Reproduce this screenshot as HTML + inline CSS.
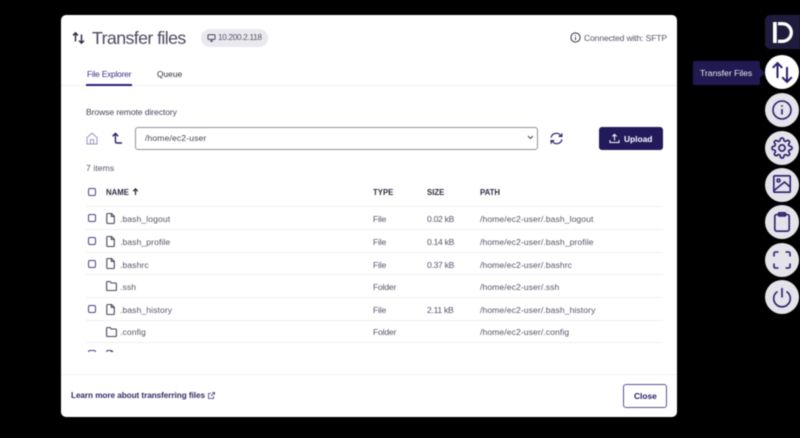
<!DOCTYPE html>
<html><head><meta charset="utf-8"><style>
html,body{margin:0;padding:0;width:800px;height:438px;overflow:hidden;background:#000;font-family:"Liberation Sans",sans-serif}
body{filter:blur(.4px)}
.a{position:absolute;white-space:nowrap}
#m{position:absolute;left:61px;top:15px;width:616px;height:402px;background:#fff;border-radius:5px}
.t{position:absolute;white-space:nowrap;font-size:8.6px;line-height:12px;color:#55546a;letter-spacing:.08px;margin-top:.5px}
.z{letter-spacing:-.3px}
.f{letter-spacing:-.2px}
.h{position:absolute;white-space:nowrap;font-size:7.8px;font-weight:bold;line-height:12px;color:#2e2d40;letter-spacing:0;margin-top:1px}
.l{position:absolute;left:86px;width:577px;height:1px;background:#efeff2}
.c{position:absolute;left:88px;width:6px;height:6px;border:1.3px solid #4a3f8f;border-radius:2px}
.s{position:absolute;left:765px;width:34px;height:34px;border-radius:50%;background:#e4e3ea}
svg{position:absolute;overflow:visible}
</style></head><body>
<div id="m"></div>

<svg style="left:72px;top:32px" width="13" height="12" viewBox="0 0 13 12" fill="none" stroke="#26263a" stroke-width="1.4"><path d="M3.500 9.500V1M1 3.400 3.500 .9 6 3.400M9.500 2.500V11M7 8.600 9.500 11.100 12 8.600"/></svg>
<div class="a" style="left:92px;top:27px;font-size:17.800px;line-height:22px;color:#4b4a5f;letter-spacing:-.6px">Transfer files</div>
<div class="a" style="left:201px;top:29px;width:67px;height:18px;border-radius:9px;background:#e9e9ee"></div>
<svg style="left:207px;top:34px" width="9" height="8" viewBox="0 0 9 8" fill="none" stroke="#45445a" stroke-width="1"><rect x="1" y=".8" width="7" height="4.600" rx=".6"/><path d="M3 7.200h3M4.500 5.400v1.800"/></svg>
<div class="a" style="left:218px;top:32px;font-size:8.200px;line-height:12px;color:#55546a;letter-spacing:-.3px">10.200.2.118</div>
<svg style="left:570px;top:32px" width="11" height="11" viewBox="0 0 11 11" fill="none" stroke="#33334a" stroke-width="1"><circle cx="5.500" cy="5.500" r="4.600"/><path d="M5.500 5v3M5.500 3v.9"/></svg>
<div class="a" style="left:584px;top:32px;font-size:8.600px;line-height:12px;color:#55546a;letter-spacing:-.15px">Connected with: SFTP</div>

<div class="a" style="left:87px;top:68px;font-size:8.400px;line-height:12px;color:#3d2f8a;letter-spacing:-.22px">File Explorer</div>
<div class="a" style="left:157px;top:68px;font-size:8.400px;line-height:12px;color:#2e2d40;letter-spacing:0">Queue</div>
<div class="a" style="left:61px;top:85px;width:616px;height:1px;background:#f1f1f4"></div>
<div class="a" style="left:86px;top:84px;width:46px;height:2px;background:#2a1c7a"></div>

<div class="a" style="left:86px;top:106px;font-size:8.600px;line-height:12px;color:#45445a;letter-spacing:-.1px">Browse remote directory</div>
<svg style="left:86px;top:132px" width="12" height="13" viewBox="0 0 12 13" fill="none" stroke="#9d97bd" stroke-width="1"><path d="M1 5.600 6 1.200l5 4.400V12H1zM4.400 12V7.600h3.200V12"/></svg>
<svg style="left:111px;top:132px" width="12" height="13" viewBox="0 0 12 13" fill="none" stroke="#2a1f6e" stroke-width="1.400"><path d="M1.600 4.200 4.400 1.400l2.800 2.800M4.400 2v7.400q0 1.600 1.600 1.600H11"/></svg>
<div class="a" style="left:135px;top:127px;width:401px;height:21px;border:1px solid #8f8f9d;border-radius:3px;background:#fff"></div>
<div class="a" style="left:145px;top:132px;font-size:8.600px;line-height:12px;color:#45445a;letter-spacing:.12px">/home/ec2-user</div>
<svg style="left:527px;top:135px" width="7" height="5" viewBox="0 0 7 5" fill="none" stroke="#45445a" stroke-width="1"><path d="M1 1l2.500 2.500L6 1"/></svg>
<svg style="left:550px;top:132px" width="13" height="13" viewBox="0 0 13 13" fill="none" stroke="#2a1f6e" stroke-width="1.200"><path d="M1 5.600A5.400 5.400 0 0 1 10.800 3.800M11.900 1.200v3.200H8.700M12 7.400A5.400 5.400 0 0 1 2.200 9.200M1.100 11.800V8.600h3.200"/></svg>
<div class="a" style="left:599px;top:127px;width:64px;height:23px;border-radius:3px;background:#231a5c"></div>
<svg style="left:609px;top:133px" width="11" height="11" viewBox="0 0 11 11" fill="none" stroke="#fff" stroke-width="1"><path d="M5.500 7.500V1.500M3.300 3.500l2.200-2.200 2.200 2.200M1 7v2.500h9V7"/></svg>
<div class="a" style="left:624px;top:133px;font-size:8.400px;font-weight:bold;line-height:12px;color:#fff;letter-spacing:0">Upload</div>

<div class="t" style="left:86px;top:161px">7 items</div>

<div style="position:absolute;left:0;top:0;width:800px;height:352px;overflow:hidden">
<div class="c" style="top:188px"></div>
<div class="h" style="left:106px;top:186px">NAME</div>
<svg style="left:132px;top:188px" width="7" height="7" viewBox="0 0 7 7" fill="none" stroke="#26263a" stroke-width="1.200"><path d="M3.500 7V1M1.200 3.200 3.500 .9 5.800 3.200"/></svg>
<div class="h" style="left:373px;top:186px">TYPE</div>
<div class="h" style="left:427px;top:186px">SIZE</div>
<div class="h" style="left:480px;top:186px">PATH</div>
<div class="l" style="top:206px"></div>

<div class="c" style="top:214px"></div>
<svg style="left:106px;top:213px" width="9" height="11" viewBox="0 0 9 11" fill="none" stroke="#45445a" stroke-width="1.100"><path d="M.8 1.500q0-1 1-1H5.500L8.300 3.300V9.500q0 1-1 1H1.800q-1 0-1-1zM5.300.5v3h3"/></svg>
<div class="t" style="left:120px;top:212px">.bash_logout</div>
<div class="t f" style="left:373px;top:212px">File</div>
<div class="t z" style="left:427px;top:212px">0.02 kB</div>
<div class="t" style="left:480px;top:212px">/home/ec2-user/.bash_logout</div>
<div class="l" style="top:229px"></div>

<div class="c" style="top:237px"></div>
<svg style="left:106px;top:236px" width="9" height="11" viewBox="0 0 9 11" fill="none" stroke="#45445a" stroke-width="1.100"><path d="M.8 1.500q0-1 1-1H5.500L8.300 3.300V9.500q0 1-1 1H1.800q-1 0-1-1zM5.300.5v3h3"/></svg>
<div class="t" style="left:120px;top:235px">.bash_profile</div>
<div class="t f" style="left:373px;top:235px">File</div>
<div class="t z" style="left:427px;top:235px">0.14 kB</div>
<div class="t" style="left:480px;top:235px">/home/ec2-user/.bash_profile</div>
<div class="l" style="top:252px"></div>

<div class="c" style="top:260px"></div>
<svg style="left:106px;top:258px" width="9" height="11" viewBox="0 0 9 11" fill="none" stroke="#45445a" stroke-width="1.100"><path d="M.8 1.500q0-1 1-1H5.500L8.300 3.300V9.500q0 1-1 1H1.800q-1 0-1-1zM5.300.5v3h3"/></svg>
<div class="t" style="left:120px;top:258px">.bashrc</div>
<div class="t f" style="left:373px;top:258px">File</div>
<div class="t z" style="left:427px;top:258px">0.37 kB</div>
<div class="t" style="left:480px;top:258px">/home/ec2-user/.bashrc</div>
<div class="l" style="top:274px"></div>

<svg style="left:106px;top:281px" width="11" height="10" viewBox="0 0 11 10" fill="none" stroke="#45445a" stroke-width="1.100"><path d="M.6 1.500q0-1 1-1H4L5.200 2H9.400q1 0 1 1V8.500q0 1-1 1H1.600q-1 0-1-1z"/></svg>
<div class="t" style="left:120px;top:280px">.ssh</div>
<div class="t f" style="left:373px;top:280px">Folder</div>
<div class="t" style="left:480px;top:280px">/home/ec2-user/.ssh</div>
<div class="l" style="top:297px"></div>

<div class="c" style="top:305px"></div>
<svg style="left:106px;top:304px" width="9" height="11" viewBox="0 0 9 11" fill="none" stroke="#45445a" stroke-width="1.100"><path d="M.8 1.500q0-1 1-1H5.500L8.300 3.300V9.500q0 1-1 1H1.800q-1 0-1-1zM5.300.5v3h3"/></svg>
<div class="t" style="left:120px;top:303px">.bash_history</div>
<div class="t f" style="left:373px;top:303px">File</div>
<div class="t z" style="left:427px;top:303px">2.11 kB</div>
<div class="t" style="left:480px;top:303px">/home/ec2-user/.bash_history</div>
<div class="l" style="top:320px"></div>

<svg style="left:106px;top:327px" width="11" height="10" viewBox="0 0 11 10" fill="none" stroke="#45445a" stroke-width="1.100"><path d="M.6 1.500q0-1 1-1H4L5.200 2H9.400q1 0 1 1V8.500q0 1-1 1H1.600q-1 0-1-1z"/></svg>
<div class="t" style="left:120px;top:325px">.config</div>
<div class="t f" style="left:373px;top:325px">Folder</div>
<div class="t" style="left:480px;top:325px">/home/ec2-user/.config</div>
<div class="l" style="top:342px"></div>

<div class="c" style="top:350px"></div>
<svg style="left:106px;top:350px" width="9" height="11" viewBox="0 0 9 11" fill="none" stroke="#45445a" stroke-width="1.100"><path d="M.8 1.500q0-1 1-1H5.500L8.300 3.300V9.500q0 1-1 1H1.800q-1 0-1-1zM5.300.5v3h3"/></svg>
<div class="t" style="left:120px;top:349px">.profile</div>
<div class="t f" style="left:373px;top:349px">File</div>
<div class="t z" style="left:427px;top:349px">0.19 kB</div>
<div class="t" style="left:480px;top:349px">/home/ec2-user/.profile</div>
</div>

<div class="a" style="left:61px;top:374px;width:616px;height:1px;background:#f1f1f4"></div>
<div class="a" style="left:71px;top:390px;font-size:8.200px;font-weight:bold;line-height:12px;color:#2f2a66;letter-spacing:-.06px">Learn more about transferring files</div>
<svg style="left:208px;top:392px" width="7" height="7" viewBox="0 0 7 7" fill="none" stroke="#3d3878" stroke-width=".8"><path d="M5.500 4v2.500H.5v-5H3M3 4l3.500-3.500M4.200.5h2.300v2.300"/></svg>
<div class="a" style="left:623px;top:384px;width:42px;height:22px;border:1px solid #5b4f9f;border-radius:3px;background:#fff"></div>
<div class="a" style="left:634px;top:390px;font-size:8.400px;font-weight:bold;line-height:12px;color:#231a5c;letter-spacing:0">Close</div>

<div class="a" style="left:765px;top:15px;width:35px;height:34px;border-radius:5px 0 0 5px;background:#1e1b3c"></div>
<svg style="left:773px;top:22px" width="20" height="21" viewBox="0 0 20 21" fill="none"><path d="M0 0h3.800v21H0z" fill="#fff"/><path d="M5 1.700h4.500a8.800 8.800 0 0 1 0 17.600H5" stroke="#fff" stroke-width="3.300"/></svg>

<div class="a" style="left:693px;top:61px;width:67px;height:24px;border-radius:2px;background:#211a52"></div>
<div class="a" style="left:760px;top:68px;width:0;height:0;border-left:5px solid #211a52;border-top:5px solid transparent;border-bottom:5px solid transparent"></div>
<div class="a" style="left:700px;top:67px;font-size:8.600px;line-height:12px;color:#e8e7f0;letter-spacing:0">Transfer Files</div>

<div class="s" style="top:55px;background:#fff"></div>
<svg style="left:771px;top:61px" width="22" height="22" viewBox="0 0 22 22" fill="none" stroke="#2a1f6e" stroke-width="2"><path d="M6.500 17V2M1.800 6.800 6.500 2l4.700 4.800M16 6v15M11.200 16.200 16 21l4.800-4.800"/></svg>

<div class="s" style="top:93px"></div>
<svg style="left:772px;top:100px" width="20" height="20" viewBox="0 0 20 20" fill="none" stroke="#2a1f6e" stroke-width="1.600"><circle cx="10" cy="10" r="9"/><path d="M10 9v5.500M10 5.200v1.600"/></svg>

<div class="s" style="top:131px"></div>
<svg style="left:771px;top:137px" width="22" height="22" viewBox="0 0 24 24" fill="none" stroke="#2a1f6e" stroke-width="1.800" stroke-linejoin="round"><circle cx="12" cy="12" r="3.400"/><path d="M19.400 15a1.650 1.650 0 0 0 .33 1.820l.06.06a2 2 0 0 1 0 2.830 2 2 0 0 1-2.830 0l-.06-.06a1.650 1.650 0 0 0-1.820-.33 1.650 1.650 0 0 0-1 1.510V21a2 2 0 0 1-2 2 2 2 0 0 1-2-2v-.09A1.650 1.650 0 0 0 9 19.400a1.650 1.650 0 0 0-1.820.33l-.06.06a2 2 0 0 1-2.830 0 2 2 0 0 1 0-2.830l.06-.06a1.650 1.650 0 0 0 .33-1.820 1.650 1.650 0 0 0-1.510-1H3a2 2 0 0 1-2-2 2 2 0 0 1 2-2h.09A1.650 1.650 0 0 0 4.600 9a1.650 1.650 0 0 0-.33-1.820l-.06-.06a2 2 0 0 1 0-2.830 2 2 0 0 1 2.830 0l.06.06a1.650 1.650 0 0 0 1.820.33H9a1.650 1.650 0 0 0 1-1.510V3a2 2 0 0 1 2-2 2 2 0 0 1 2 2v.09a1.650 1.650 0 0 0 1 1.510 1.650 1.650 0 0 0 1.820-.33l.06-.06a2 2 0 0 1 2.830 0 2 2 0 0 1 0 2.830l-.06.06a1.650 1.650 0 0 0-.33 1.820V9a1.650 1.650 0 0 0 1.510 1H21a2 2 0 0 1 2 2 2 2 0 0 1-2 2h-.09a1.650 1.650 0 0 0-1.510 1z"/></svg>

<div class="s" style="top:168px"></div>
<svg style="left:773px;top:175px" width="18" height="18" viewBox="0 0 18 18" fill="none" stroke="#2a1f6e" stroke-width="1.600"><rect x=".8" y=".8" width="16.400" height="16.400" rx="1"/><circle cx="5.500" cy="5.500" r="1.500"/><path d="M1 15.500 11.500 7l5.700 5"/></svg>

<div class="s" style="top:205px"></div>
<svg style="left:774px;top:212px" width="16" height="20" viewBox="0 0 16 20" fill="none" stroke="#2a1f6e" stroke-width="1.600"><rect x=".8" y="2.500" width="14.400" height="16.700" rx="2"/><rect x="4.500" y=".8" width="7" height="3.200" rx="1"/></svg>

<div class="s" style="top:243px"></div>
<svg style="left:773px;top:251px" width="18" height="18" viewBox="0 0 18 18" fill="none" stroke="#2a1f6e" stroke-width="1.600"><path d="M1 5.500V2.500q0-1.500 1.500-1.500H5.500M12.500 1h3q1.500 0 1.500 1.500v3M17 12.500v3q0 1.500-1.500 1.500h-3M5.500 17h-3Q1 17 1 15.500v-3"/></svg>

<div class="s" style="top:280px"></div>
<svg style="left:772px;top:287px" width="20" height="20" viewBox="0 0 20 20" fill="none" stroke="#2a1f6e" stroke-width="1.600"><path d="M10 1v9.500M5.500 4.500a8.300 8.300 0 1 0 9 0"/></svg>
</body></html>
